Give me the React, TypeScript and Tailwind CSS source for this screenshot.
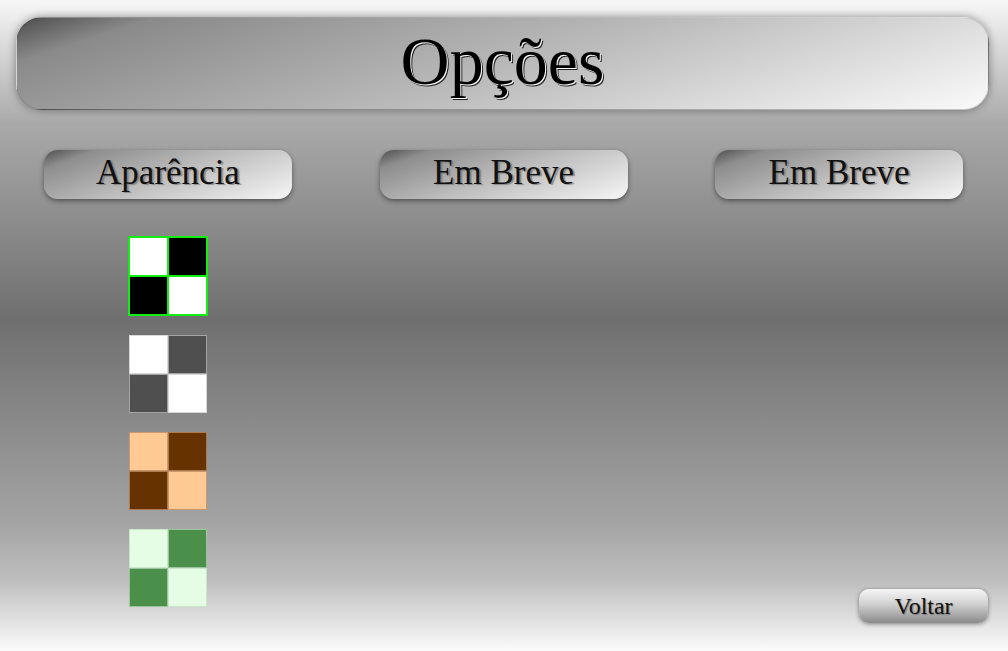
import React from "react";

const serif = { fontFamily: '"Liberation Serif", "DejaVu Serif", serif' };

const swatches = [
  { light: "#ffffff", dark: "#000000", edge: "#11ee11", selected: true },
  { light: "#ffffff", dark: "#4f4f4f", edge: "rgba(200,200,200,0.7)", selected: false },
  { light: "#ffc993", dark: "#663300", edge: "rgba(190,140,100,0.8)", selected: false },
  { light: "#e4fde4", dark: "#4a8f4a", edge: "rgba(190,220,190,0.7)", selected: false },
];

function Swatch({ light, dark, edge, selected }: (typeof swatches)[number]) {
  const cells = [light, dark, dark, light];
  return (
    <button
      className={`grid grid-cols-2 ${selected ? "border border-[#11ee11]" : ""}`}
      style={{ borderColor: selected ? edge : undefined }}
    >
      {cells.map((c, i) => (
        <span
          key={i}
          className="block h-[39px] w-[39px] border"
          style={{ backgroundColor: c, borderColor: edge }}
        />
      ))}
    </button>
  );
}

function TabButton({ label }: { label: string }) {
  return (
    <button
      className="flex h-[49px] w-[248px] items-center justify-center rounded-[14px] bg-[linear-gradient(160deg,#4f4f4f_0%,#8e8e8e_14%,#bdbdbd_50%,#f6f6f6_100%)] pb-[3px] text-[35px] text-[#111] shadow-[0_2px_5px_rgba(0,0,0,0.45)] [text-shadow:2px_1px_1px_rgba(110,110,110,0.7)]"
      style={serif}
    >
      {label}
    </button>
  );
}

export default function App() {
  return (
    <div
      className="flex h-[651px] w-full flex-col bg-[linear-gradient(to_bottom,#f7f7f7_0%,#a9a9a9_19%,#6f6f6f_49%,#a3a3a3_80%,#bdbdbd_89%,#fbfbfb_100%)]"
      style={serif}
    >
      <div className="pl-[16px] pr-[19px] pt-[17px]">
        <header className="flex h-[93px] items-center justify-center rounded-[26px] border border-black/10 bg-[linear-gradient(162deg,#4d4d4d_0%,#8a8a8a_11%,#bababa_52%,#fafafa_100%)] shadow-[0_0_8px_rgba(0,0,0,0.4)]">
          <h1 className="pb-[6px] text-[68px] leading-none text-black [text-shadow:1px_1px_0_#ffffff,2px_2px_0_#222222]">
            Opções
          </h1>
        </header>
      </div>

      <nav className="mt-[40px] flex justify-between pl-[44px] pr-[45px]">
        <TabButton label="Aparência" />
        <TabButton label="Em Breve" />
        <TabButton label="Em Breve" />
      </nav>

      <main className="flex flex-1">
        <section className="ml-[44px] mt-[37px] flex w-[248px] flex-col items-center gap-[19px]">
          {swatches.map((s, i) => (
            <Swatch key={i} {...s} />
          ))}
        </section>
        <div className="flex flex-1 items-end justify-end pb-[28px] pr-[20px]">
          <button
            className="flex h-[34px] w-[129px] items-center justify-center rounded-[10px] bg-[linear-gradient(to_bottom,#f6f6f6_0%,#d0d0d0_45%,#8a8a8a_100%)] pb-[1px] text-[24px] text-[#111] shadow-[0_1px_4px_rgba(0,0,0,0.45)] [text-shadow:1px_1px_1px_rgba(100,100,100,0.7)]"
            style={serif}
          >
            Voltar
          </button>
        </div>
      </main>
    </div>
  );
}
